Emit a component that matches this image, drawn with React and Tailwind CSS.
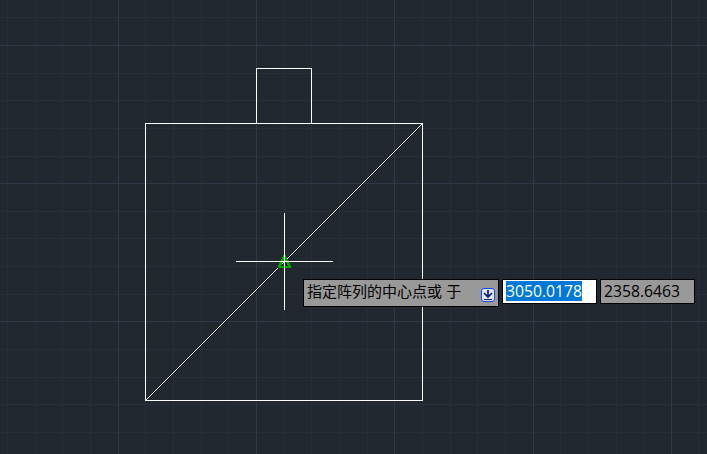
const minorX = [7, 35, 62, 90, 145, 173, 201, 228, 284, 311, 339, 367, 422, 450, 477, 505, 560, 588, 616, 643, 698];
const majorX = [118, 256, 394, 533, 671];
const minorY = [17, 73, 100, 128, 156, 211, 238, 266, 294, 349, 377, 404, 432];
const majorY = [45, 183, 321];

function Grid() {
  return (
    <g>
      <g fill="#272d3a">
        {minorX.map((x) => <rect key={x} x={x} y="0" width="1" height="454" />)}
        {minorY.map((y) => <rect key={y} x="0" y={y} width="707" height="1" />)}
      </g>
      <g fill="#323848">
        {majorX.map((x) => <rect key={x} x={x} y="0" width="1" height="454" />)}
        {majorY.map((y) => <rect key={y} x="0" y={y} width="707" height="1" />)}
      </g>
    </g>
  );
}

function Drawing() {
  return (
    <svg className="block h-[454px] w-[707px]" viewBox="0 0 707 454" shapeRendering="crispEdges">
      <Grid />
      <g fill="none" stroke="#fff" strokeWidth="1">
        <rect x="145.5" y="123.5" width="277" height="277" />
        <path d="M256.5 123V68.5H311.5V123" />
        <path d="M145.5 400.5L422.5 123.5" />
      </g>
      <path d="M283.5 255H285.5L291 266V268H278V266ZM284.5 259L281 266H288Z" fill="#00a800" fillRule="evenodd" />
      <path d="M284.5 213V310M236 261.5H333" stroke="#fff" strokeWidth="1" />
    </svg>
  );
}

function DownArrowBadge() {
  return (
    <svg className="mt-2 h-3.5 w-3.5 shrink-0" viewBox="0 0 14 14">
      <rect x="0.5" y="0.5" width="13" height="13" rx="2.5" fill="#dfe3ef" stroke="#1446f0" />
      <path d="M7 2V9M3 5L7 9L11 5" fill="none" stroke="#071c6c" strokeWidth="1.7" />
      <path d="M3 11.5H11" stroke="#071c6c" strokeWidth="1" />
    </svg>
  );
}

export default function App() {
  return (
    <main className="relative h-[454px] w-[707px] overflow-hidden bg-[#222830] font-['Noto_Sans','Noto_Sans_CJK_SC',sans-serif] text-black">
      <Drawing />
      <div className="absolute top-[279px] left-[303px] flex items-start whitespace-nowrap">
        <div className="flex h-7 w-[196px] items-start justify-between border border-black bg-[#999] pr-[3px] pl-[3px]">
          <span className="font-['Noto_Sans_CJK_SC',sans-serif] text-[15px] leading-[22px] [word-spacing:1px]">指定阵列的中心点或 于</span>
          <DownArrowBadge />
        </div>
        <div className="ml-[3px] h-[25px] w-[95px] border border-black bg-white pt-px pl-[3px]">
          <span className="block h-5 w-[76px] bg-[#0078d7] font-['Open_Sans','Noto_Sans',sans-serif] text-[15.7px] leading-5 text-white">3050.0178</span>
        </div>
        <div className="ml-[3px] h-[25px] w-[95px] border border-black bg-[#999] pt-px pl-[3px]">
          <span className="block font-['Open_Sans','Noto_Sans',sans-serif] text-[15.7px] leading-5">2358.6463</span>
        </div>
      </div>
    </main>
  );
}
